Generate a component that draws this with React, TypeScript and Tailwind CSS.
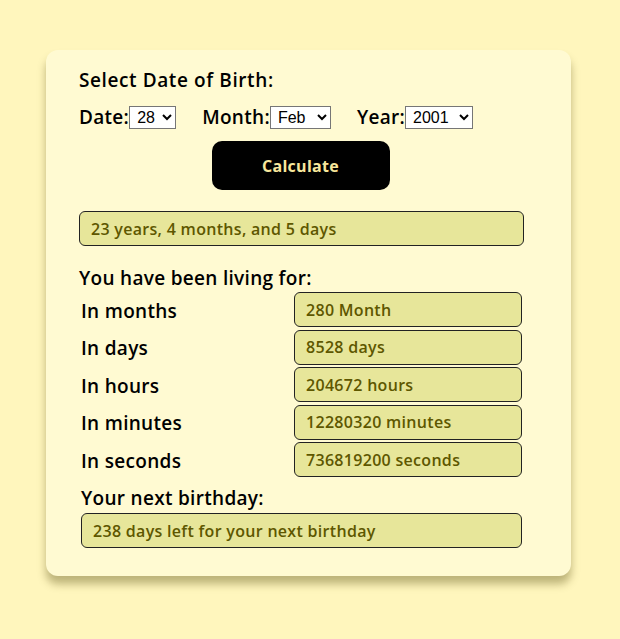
const rows = [
  ["In months", "280 Month"],
  ["In days", "8528 days"],
  ["In hours", "204672 hours"],
  ["In minutes", "12280320 minutes"],
  ["In seconds", "736819200 seconds"],
]

function Pick({ value, options, w }: { value: string; options: string[]; w: string }) {
  return (
    <select
      defaultValue={value}
      className={`${w} h-[23px] border border-[#767676] bg-white pl-[3px] text-[16px] font-normal tracking-normal text-black font-['Liberation_Sans',sans-serif]`}
    >
      {options.map((o) => (
        <option key={o}>{o}</option>
      ))}
    </select>
  )
}

const box =
  "flex items-center h-[35px] rounded-[6px] border border-[#222] bg-[#e7e69a] text-[16px] font-semibold tracking-[0.3px] text-[#5e5700]"

export default function App() {
  return (
    <div
      className="min-h-[639px] bg-[#fff6bd] pt-[50px]"
      style={{ fontFamily: "'Open Sans', Lato, sans-serif" }}
    >
      <div className="ml-[46px] w-[525px] h-[526px] rounded-[12px] bg-[#fffad2] shadow-[0_8px_8px_rgba(90,80,20,0.4)] pl-[33px] pr-[47px] pt-[17px] text-black">
        <h2 className="text-[19px] font-semibold leading-[26px] tracking-[0.6px]">Select Date of Birth:</h2>
        <div className="mt-[13px] flex h-[23px] items-center text-[19px] font-semibold tracking-[0.3px]">
          <label className="flex items-center">
            Date:
            <Pick w="w-[47px]" value="28" options={["27", "28", "29"]} />
          </label>
          <label className="ml-[26px] flex items-center">
            Month:
            <Pick w="w-[61px]" value="Feb" options={["Jan", "Feb", "Mar"]} />
          </label>
          <label className="ml-[26px] flex items-center">
            Year:
            <Pick w="w-[68px]" value="2001" options={["2000", "2001", "2002"]} />
          </label>
        </div>
        <div className="mt-[12px] flex justify-center">
          <button className="ml-[-2px] h-[49px] w-[178px] rounded-[10px] bg-black text-[16px] font-bold tracking-[0.3px] text-[#f8e79c]">
            Calculate
          </button>
        </div>
        <div className={`${box} mt-[21px] w-[445px] pl-[11px]`}>23 years, 4 months, and 5 days</div>
        <h3 className="mt-[19px] text-[19px] font-semibold leading-[26px] tracking-[0.3px]">You have been living for:</h3>
        <div className="mt-[1px] flex flex-col gap-[2.5px] pl-[2px]">
          {rows.map(([label, val]) => (
            <div key={label} className="flex items-center">
              <span className="mt-[3px] w-[213px] text-[19px] font-semibold tracking-[0.3px]">{label}</span>
              <div className={`${box} w-[228px] pl-[11px]`}>{val}</div>
            </div>
          ))}
        </div>
        <h3 className="mt-[8px] pl-[2px] text-[19px] font-semibold leading-[26px] tracking-[0.3px]">Your next birthday:</h3>
        <div className={`${box} mt-[2px] ml-[2px] w-[441px] pl-[11px]`}>238 days left for your next birthday</div>
      </div>
    </div>
  )
}
